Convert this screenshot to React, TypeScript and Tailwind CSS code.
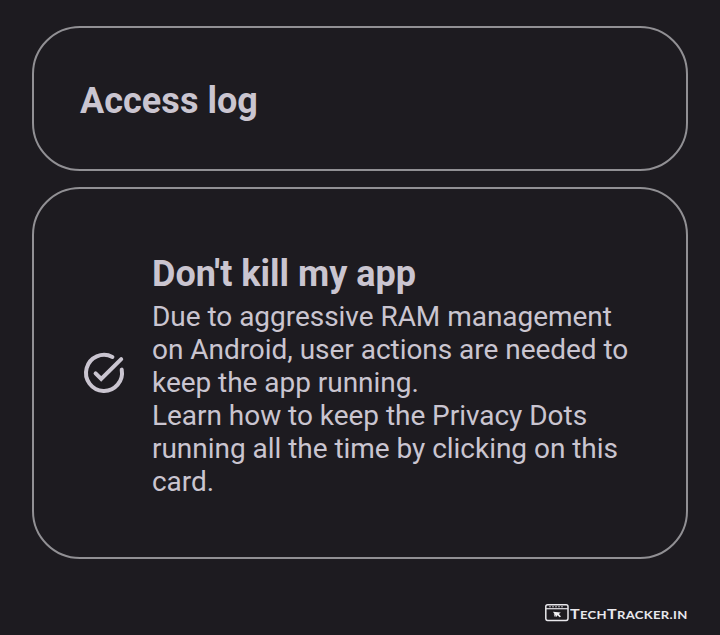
function CheckIcon() {
  return (
    <svg viewBox="0 0 24 24" className="size-12 shrink-0" fill="none" stroke="#cac5d0" strokeWidth="2" strokeLinecap="round" strokeLinejoin="miter">
      <path d="M16.2 4A9 9 0 1 0 20.85 10.3" />
      <path d="M7.8 12.2L10.6 15L20.6 5.1" />
    </svg>
  );
}

function BrowserLogo() {
  return (
    <svg viewBox="0 0 24 18" className="h-[18px] w-6 shrink-0" fill="none">
      <rect x="0.8" y="0.8" width="22.2" height="15.6" rx="1.8" stroke="#e9e8ec" strokeWidth="1.5" />
      <path d="M1 4.7H23" stroke="#e4e3e7" strokeWidth="1.2" />
      <path d="M4 2.8H19" stroke="#b9b8bd" strokeWidth="1" strokeDasharray="2 1" />
      <path d="M8 7.7L15.8 8.4L13.9 10.1L16 12.4L14.6 13.2L12.5 11.2L11.3 13Z" fill="#f1f0f3" />
      <path d="M9.3 10.2L10.1 12.8" stroke="#d0cfd4" strokeWidth="1" />
    </svg>
  );
}

export default function App() {
  return (
    <main className="flex h-[635px] w-[720px] flex-col overflow-hidden bg-[#1d1b20] px-8 pt-[26px] font-['Roboto',sans-serif] text-[#cac5d0]">
      <section className="flex h-[145px] shrink-0 items-center rounded-[48px] border-2 border-[#919094] pt-[5px] pl-[46px]">
        <h2 className="text-[36px] leading-[42px] font-bold tracking-[0.05px] whitespace-nowrap">Access log</h2>
      </section>
      <section className="mt-4 flex h-[372px] shrink-0 items-center gap-6 rounded-[48px] border-2 border-[#919094] pl-[46px]">
        <CheckIcon />
        <div className="pt-[5px]">
          <h2 className="pb-px text-[36px] leading-[42px] font-bold whitespace-nowrap">Don't kill my app</h2>
          <p className="mt-1 text-[28px] leading-[33px] tracking-[-0.035px] whitespace-nowrap">
            Due to aggressive RAM management<br />
            on Android, user actions are needed to<br />
            keep the app running.<br />
            Learn how to keep the Privacy Dots<br />
            running all the time by clicking on this<br />
            card.
          </p>
        </div>
      </section>
      <footer className="mt-[45px] ml-[513px] flex h-[18px] items-center gap-px">
        <BrowserLogo />
        <span className="origin-left scale-x-[1.15] pt-[3px] font-['Lato',sans-serif] text-[14px] leading-[18px] font-bold tracking-[0.26px] whitespace-nowrap text-[#e9e8ec]">
          T<span className="text-[11.4px]">ECH</span>T<span className="text-[11.4px]">RACKER.IN</span>
        </span>
      </footer>
    </main>
  );
}
